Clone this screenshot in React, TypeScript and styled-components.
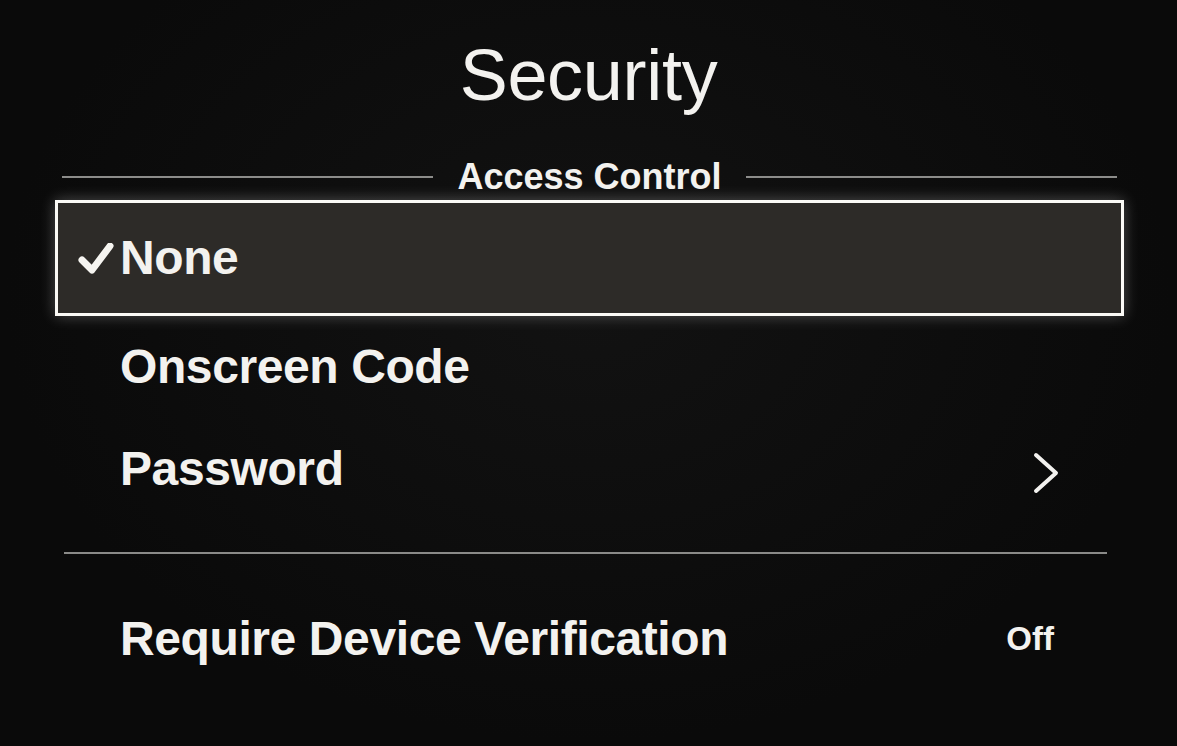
import React from "react";
import styled, { createGlobalStyle } from "styled-components";

const Global = createGlobalStyle`
  html, body { margin: 0; padding: 0; background: #0a0a0a; }
  body { font-family: "Liberation Sans", Arial, Helvetica, sans-serif; color: #f3f2ef; }
  #root { width: 1177px; height: 746px; overflow: hidden; }
`;

const Page = styled.div`
  width: 1177px;
  height: 746px;
  box-sizing: border-box;
  padding-top: 39px;
  display: flex;
  flex-direction: column;
  background: radial-gradient(ellipse at 50% 40%, #121212 0%, #0a0a0a 70%);
`;

const Title = styled.h1`
  margin: 0;
  font-size: 72px;
  line-height: 72px;
  font-weight: 400;
  text-align: center;
  letter-spacing: -0.3px;
`;

const SectionHeader = styled.div`
  margin: 44px 60px 0 62px;
  height: 44px;
  display: flex;
  align-items: center;
  gap: 24px;
`;

const Rule = styled.div`
  flex: 1;
  height: 2px;
  background: #8c8c8a;
`;

const HeaderText = styled.span`
  font-size: 36px;
  font-weight: 700;
  line-height: 44px;
  white-space: nowrap;
`;

const List = styled.div`
  margin: 1px 0 0 55px;
  width: 1069px;
  display: flex;
  flex-direction: column;
`;

const Row = styled.div<{ $selected?: boolean; $height?: number }>`
  position: relative;
  box-sizing: border-box;
  height: ${(p) => p.$height ?? 102}px;
  display: flex;
  align-items: center;
  padding: 0 61px 0 62px;
  border: 3px solid ${(p) => (p.$selected ? "#fbfaf6" : "transparent")};
  background: ${(p) => (p.$selected ? "#2d2b28" : "transparent")};
  box-shadow: ${(p) =>
    p.$selected ? "0 0 14px rgba(255,255,255,0.28)" : "none"};
`;

const Label = styled.span`
  flex: 1;
  font-size: 48px;
  font-weight: 700;
  line-height: 56px;
  letter-spacing: -0.4px;
  white-space: nowrap;
`;

const Value = styled.span`
  font-size: 33px;
  font-weight: 700;
  line-height: 40px;
  margin-right: 6px;
`;

const Check = styled.svg`
  position: absolute;
  left: 20px;
  top: 40px;
`;

const Chevron = styled.svg`
  margin-top: 8px;
`;

const Divider = styled.div`
  margin: 32px 17px 0 9px;
  height: 2px;
  background: #8a8a88;
`;

const LastRow = styled(Row)`
  margin-top: 34px;
`;

export default function App() {
  return (
    <>
      <Global />
      <Page>
        <Title>Security</Title>
        <SectionHeader>
          <Rule />
          <HeaderText>Access Control</HeaderText>
          <Rule />
        </SectionHeader>
        <List>
          <Row $selected $height={116}>
            <Check width="36" height="32" viewBox="0 0 36 32">
              <path
                d="M4 17 L14 27 L32 3"
                fill="none"
                stroke="#f6f5f1"
                strokeWidth="7"
                strokeLinecap="round"
                strokeLinejoin="round"
              />
            </Check>
            <Label>None</Label>
          </Row>
          <Row>
            <Label>Onscreen Code</Label>
          </Row>
          <Row>
            <Label>Password</Label>
            <Chevron width="28" height="42" viewBox="0 0 28 42">
              <path
                d="M4 3 L24 21 L4 39"
                fill="none"
                stroke="#f3f2ef"
                strokeWidth="4"
                strokeLinecap="round"
                strokeLinejoin="round"
              />
            </Chevron>
          </Row>
          <Divider />
          <LastRow>
            <Label>Require Device Verification</Label>
            <Value>Off</Value>
          </LastRow>
        </List>
      </Page>
    </>
  );
}
